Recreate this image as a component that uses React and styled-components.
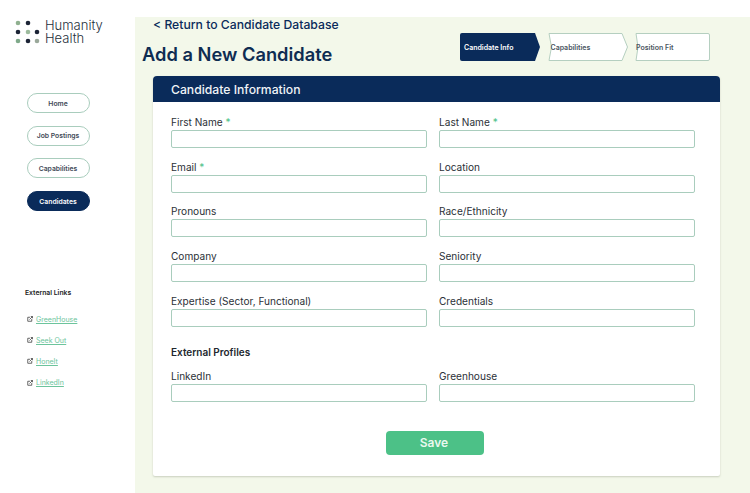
import React from 'react'
import styled, { createGlobalStyle } from 'styled-components'

const GlobalStyle = createGlobalStyle`
  html, body { margin: 0; padding: 0; background: #fff; }
  body { font-family: Inter, "Liberation Sans", sans-serif; overflow: hidden; }
  * { box-sizing: border-box; }
`

const NAVY = '#0a2b5a'
const GREEN = '#4cc187'
const BORDER = '#a9cdbd'

const Page = styled.div`
  display: flex;
  width: 750px;
  height: 493px;
  overflow: hidden;
`

const Sidebar = styled.aside`
  width: 135px;
  flex: none;
  display: flex;
  flex-direction: column;
`

const Logo = styled.div`
  display: flex;
  align-items: center;
  gap: 5px;
  padding: 12px 0 0 15px;
  height: 51px;
`

const LogoText = styled.div`
  font-size: 13px;
  line-height: 13px;
  color: #25303b;
  font-weight: 300;
`

const Nav = styled.nav`
  display: flex;
  flex-direction: column;
  gap: 12.7px;
  padding: 42px 0 0 26.5px;
`

const NavItem = styled.a`
  width: 63px;
  height: 20px;
  border-radius: 10px;
  display: flex;
  align-items: center;
  justify-content: center;
  font-size: 6.8px;
  font-weight: 600;
  color: ${(p) => (p.$active ? '#fff' : '#3f4a57')};
  background: ${(p) => (p.$active ? NAVY : '#fff')};
  border: 1px solid ${(p) => (p.$active ? NAVY : BORDER)};
`

const LinksBlock = styled.div`
  padding: 76px 0 0 25px;
`

const LinksTitle = styled.div`
  font-size: 6.8px;
  line-height: 12px;
  font-weight: 600;
  color: #222;
  margin-bottom: 14px;
`

const LinkList = styled.div`
  display: flex;
  flex-direction: column;
  gap: 9.2px;
  padding-left: 2px;
`

const LinkRow = styled.div`
  display: flex;
  align-items: center;
  gap: 3px;
  height: 12px;
`

const ExtLink = styled.a`
  font-size: 7px;
  font-weight: 400;
  color: #6cc49c;
  text-decoration: underline;
  text-underline-offset: 1px;
`

const Main = styled.main`
  flex: 1;
  margin-top: 17px;
  background: #f3f8ea;
  padding: 0 30px 17px 7px;
  display: flex;
  flex-direction: column;
`

const Head = styled.header`
  display: flex;
  justify-content: space-between;
  height: 59px;
  padding-right: 10px;
`

const BackLink = styled.a`
  display: block;
  margin: 0 0 0 11px;
  font-size: 12.2px;
  line-height: 15px;
  font-weight: 500;
  color: ${NAVY};
`

const Title = styled.h1`
  margin: 8px 0 0;
  font-size: 18.3px;
  line-height: 28px;
  font-weight: 600;
  color: #0e2c52;
`

const Steps = styled.div`
  display: flex;
  gap: 7.5px;
  padding-top: 16px;
`

const Step = styled.div`
  position: relative;
  width: ${(p) => p.$w}px;
  height: 28px;
  padding-left: ${(p) => p.$pl}px;
  display: flex;
  align-items: center;
  font-size: 7px;
  font-weight: 600;
  color: ${(p) => (p.$active ? '#fff' : '#4a5561')};
`

const StepShape = styled.svg`
  position: absolute;
  inset: 0;
`

const StepLabel = styled.span`
  position: relative;
`

const Card = styled.section`
  margin-left: 11px;
  width: 567px;
  height: 400px;
  background: #fff;
  border-radius: 4px 4px 2px 2px;
  box-shadow: 0 1px 2px rgba(120, 130, 110, 0.35);
`

const CardHead = styled.div`
  height: 26px;
  background: ${NAVY};
  border-radius: 4px 4px 0 0;
  padding-left: 18px;
  display: flex;
  align-items: center;
  font-size: 12.2px;
  font-weight: 500;
  color: #f0f4f7;
`

const Form = styled.form`
  padding: 14px 25px 0 18px;
`

const Grid = styled.div`
  display: grid;
  grid-template-columns: 256px 256px;
  column-gap: 12px;
  row-gap: 12.7px;
`

const Field = styled.div`
  display: flex;
  flex-direction: column;
  gap: 1px;
`

const Label = styled.label`
  font-size: 10.1px;
  line-height: 13px;
  color: #2c3138;
`

const Req = styled.span`
  color: ${GREEN};
`

const Input = styled.input`
  height: 18px;
  width: 100%;
  border: 1px solid ${BORDER};
  border-radius: 2px;
  background: #fff;
  outline: none;
  padding: 0 4px;
`

const Section = styled.h2`
  margin: 19px 0 11px;
  font-size: 10px;
  line-height: 13px;
  font-weight: 600;
  color: #22272e;
`

const Actions = styled.div`
  display: flex;
  justify-content: center;
  padding: 29px 0 0 4px;
`

const SaveButton = styled.button`
  width: 98px;
  height: 24px;
  border: none;
  border-radius: 4px;
  padding: 0 2px 0 0;
  background: ${GREEN};
  color: #e9f8ef;
  font-family: inherit;
  font-size: 12px;
  font-weight: 600;
`

const LogoMark = () => {
  const dots = [
    [3, 3, '#8fb08f'], [13, 3, '#1c2436'],
    [3, 12, '#1c2436'], [13, 12, '#9dbb9d'], [22, 12, '#1c2436'],
    [3, 21, '#7fa98a'], [13, 21, '#1c2436'], [22, 21, '#9aa89a'],
  ]
  return (
    <svg width="25" height="24" viewBox="0 0 25 24">
      {dots.map(([cx, cy, fill]) => (
        <circle key={`${cx}-${cy}`} cx={cx} cy={cy} r="2.3" fill={fill} />
      ))}
    </svg>
  )
}

const ExtIcon = () => (
  <svg width="6" height="6" viewBox="0 0 12 12" fill="none" stroke="#444" strokeWidth="1.6">
    <path d="M6 2.5H1.5v8h8V6" />
    <path d="M5 7l6-6M7.5 1H11v3.5" />
  </svg>
)

const navItems = ['Home', 'Job Postings', 'Capabilities', 'Candidates']
const links = ['GreenHouse', 'Seek Out', 'HoneIt', 'LinkedIn']
const rows = [
  ['First Name', true], ['Last Name', true],
  ['Email', true], ['Location'],
  ['Pronouns'], ['Race/Ethnicity'],
  ['Company'], ['Seniority'],
  ['Expertise (Sector, Functional)'], ['Credentials'],
]

const FieldBox = ({ name, required }) => (
  <Field>
    <Label>
      {name}
      {required && <Req> *</Req>}
    </Label>
    <Input />
  </Field>
)

export default function App() {
  return (
    <Page>
      <GlobalStyle />
      <Sidebar>
        <Logo>
          <LogoMark />
          <LogoText>
            Humanity
            <br />
            Health
          </LogoText>
        </Logo>
        <Nav>
          {navItems.map((n) => (
            <NavItem key={n} $active={n === 'Candidates'}>{n}</NavItem>
          ))}
        </Nav>
        <LinksBlock>
          <LinksTitle>External Links</LinksTitle>
          <LinkList>
            {links.map((l) => (
              <LinkRow key={l}>
                <ExtIcon />
                <ExtLink>{l}</ExtLink>
              </LinkRow>
            ))}
          </LinkList>
        </LinksBlock>
      </Sidebar>
      <Main>
        <Head>
          <div>
            <BackLink>&lt; Return to Candidate Database</BackLink>
            <Title>Add a New Candidate</Title>
          </div>
          <Steps>
            <Step $w={80} $pl={4} $active>
              <StepShape width="80" height="28">
                <path d="M2 0H75L80 14L75 28H2A2 2 0 0 1 0 26V2A2 2 0 0 1 2 0Z" fill={NAVY} />
              </StepShape>
              <StepLabel>Candidate Info</StepLabel>
            </Step>
            <Step $w={80} $pl={3}>
              <StepShape width="80" height="28">
                <path d="M1 .5H74L79.5 14L74 27.5H1L3.5 14Z" fill="#fff" stroke="#b5cfc0" />
              </StepShape>
              <StepLabel>Capabilities</StepLabel>
            </Step>
            <Step $w={75} $pl={1}>
              <StepShape width="75" height="28">
                <path d="M1 .5H73A1.5 1.5 0 0 1 74.5 2V26A1.5 1.5 0 0 1 73 27.5H1L3 14Z" fill="#fff" stroke="#b5cfc0" />
              </StepShape>
              <StepLabel>Position Fit</StepLabel>
            </Step>
          </Steps>
        </Head>
        <Card>
          <CardHead>Candidate Information</CardHead>
          <Form>
            <Grid>
              {rows.map(([name, required]) => (
                <FieldBox key={name} name={name} required={required} />
              ))}
            </Grid>
            <Section>External Profiles</Section>
            <Grid>
              <FieldBox name="LinkedIn" />
              <FieldBox name="Greenhouse" />
            </Grid>
            <Actions>
              <SaveButton type="button">Save</SaveButton>
            </Actions>
          </Form>
        </Card>
      </Main>
    </Page>
  )
}
